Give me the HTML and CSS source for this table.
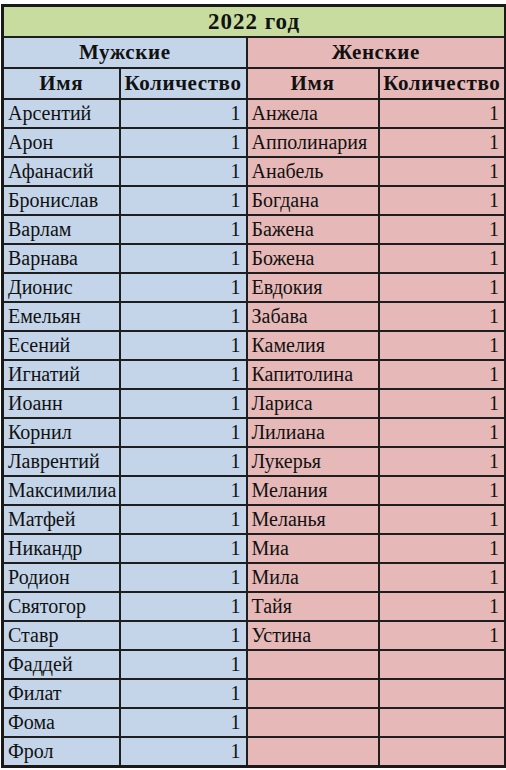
FILE: index.html
```html
<!DOCTYPE html>
<html lang="ru">
<head>
<meta charset="utf-8">
<title>2022 год</title>
<link rel="stylesheet" href="styles.css">
</head>
<body>
<table class="names">
  <colgroup>
    <col class="c1"><col class="c2"><col class="c3"><col class="c4">
  </colgroup>
  <thead>
    <tr class="hrow"><th colspan="4" class="title">2022 год</th></tr>
    <tr class="hrow"><th colspan="2" class="m">Мужские</th><th colspan="2" class="f">Женские</th></tr>
    <tr class="hrow"><th class="m">Имя</th><th class="m">Количество</th><th class="f">Имя</th><th class="f">Количество</th></tr>
  </thead>
  <tbody>
    <tr><td class="m n">Арсентий</td><td class="m q">1</td><td class="f n">Анжела</td><td class="f q">1</td></tr>
    <tr><td class="m n">Арон</td><td class="m q">1</td><td class="f n">Апполинария</td><td class="f q">1</td></tr>
    <tr><td class="m n">Афанасий</td><td class="m q">1</td><td class="f n">Анабель</td><td class="f q">1</td></tr>
    <tr><td class="m n">Бронислав</td><td class="m q">1</td><td class="f n">Богдана</td><td class="f q">1</td></tr>
    <tr><td class="m n">Варлам</td><td class="m q">1</td><td class="f n">Бажена</td><td class="f q">1</td></tr>
    <tr><td class="m n">Варнава</td><td class="m q">1</td><td class="f n">Божена</td><td class="f q">1</td></tr>
    <tr><td class="m n">Дионис</td><td class="m q">1</td><td class="f n">Евдокия</td><td class="f q">1</td></tr>
    <tr><td class="m n">Емельян</td><td class="m q">1</td><td class="f n">Забава</td><td class="f q">1</td></tr>
    <tr><td class="m n">Есений</td><td class="m q">1</td><td class="f n">Камелия</td><td class="f q">1</td></tr>
    <tr><td class="m n">Игнатий</td><td class="m q">1</td><td class="f n">Капитолина</td><td class="f q">1</td></tr>
    <tr><td class="m n">Иоанн</td><td class="m q">1</td><td class="f n">Лариса</td><td class="f q">1</td></tr>
    <tr><td class="m n">Корнил</td><td class="m q">1</td><td class="f n">Лилиана</td><td class="f q">1</td></tr>
    <tr><td class="m n">Лаврентий</td><td class="m q">1</td><td class="f n">Лукерья</td><td class="f q">1</td></tr>
    <tr><td class="m n">Максимилиа</td><td class="m q">1</td><td class="f n">Мелания</td><td class="f q">1</td></tr>
    <tr><td class="m n">Матфей</td><td class="m q">1</td><td class="f n">Меланья</td><td class="f q">1</td></tr>
    <tr><td class="m n">Никандр</td><td class="m q">1</td><td class="f n">Миа</td><td class="f q">1</td></tr>
    <tr><td class="m n">Родион</td><td class="m q">1</td><td class="f n">Мила</td><td class="f q">1</td></tr>
    <tr><td class="m n">Святогор</td><td class="m q">1</td><td class="f n">Тайя</td><td class="f q">1</td></tr>
    <tr><td class="m n">Ставр</td><td class="m q">1</td><td class="f n">Устина</td><td class="f q">1</td></tr>
    <tr><td class="m n">Фаддей</td><td class="m q">1</td><td class="f n"></td><td class="f q"></td></tr>
    <tr><td class="m n">Филат</td><td class="m q">1</td><td class="f n"></td><td class="f q"></td></tr>
    <tr><td class="m n">Фома</td><td class="m q">1</td><td class="f n"></td><td class="f q"></td></tr>
    <tr><td class="m n">Фрол</td><td class="m q">1</td><td class="f n"></td><td class="f q"></td></tr>
  </tbody>
</table>
</body>
</html>
```

FILE: styles.css
```css
html, body {
  margin: 0;
  padding: 0;
  background: #ffffff;
}
body {
  padding: 4px 0 0 1px;
  font-family: "Liberation Serif", "Times New Roman", serif;
  color: #111111;
}
.names {
  border-collapse: collapse;
  table-layout: fixed;
  width: 503px;
  border: 3px solid #1a1a1a;
}
.c1 { width: 117px; }
.c2 { width: 127px; }
.c3 { width: 132px; }
.c4 { width: 127px; }
.names th,
.names td {
  border: 2px solid #1e1e1e;
  padding: 0;
  overflow: hidden;
  white-space: nowrap;
}
.names td {
  height: 27px;
  font-size: 20px;
  line-height: 27px;
}
.names th {
  height: 29px;
  font-size: 21px;
  font-weight: bold;
  line-height: 29px;
  letter-spacing: 0.6px;
  text-align: center;
}
.names th.title {
  background: #c8dc9f;
  font-size: 23px;
  letter-spacing: 1px;
}
.m { background: #c4d5ea; }
.f { background: #e6b9b8; }
.n {
  text-align: left;
  padding-left: 4px !important;
}
.q {
  text-align: right;
  padding-right: 5px !important;
}
```
